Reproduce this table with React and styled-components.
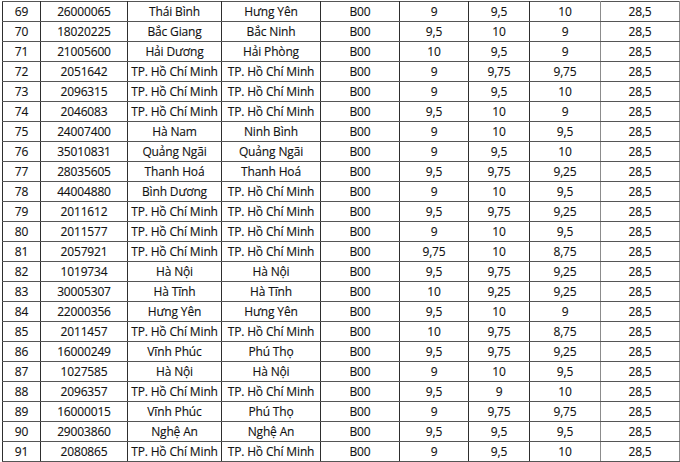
import React from "react";
import styled, { createGlobalStyle } from "styled-components";

const Global = createGlobalStyle`
  html, body { margin: 0; padding: 0; background: #fff; }
  body { font-family: "Open Sans", "Noto Sans", sans-serif; }
`;

const Wrap = styled.div`
  padding: 1px 0 0 2px;
`;

const Table = styled.table`
  border-collapse: collapse;
  table-layout: fixed;
  width: 678px;
  font-size: 12px;
  color: #111;
`;

const Row = styled.tr`
  height: 20px;
`;

const Cell = styled.td`
  border: 1px solid ${(p) => (p.$light ? "#8c8c8c" : "#2e2e2e")};
  border-top-color: #555;
  border-bottom-color: #555;
  padding: 0;
  text-align: center;
  line-height: 18px;
  white-space: nowrap;
  overflow: hidden;
  letter-spacing: -0.15px;
  -webkit-text-stroke: 0.12px #111;
`;

const widths = [38, 87, 94, 99, 79, 69, 61, 71, 79];
const TP = "TP. Hồ Chí Minh";

const data = [
  [69, "26000065", "Thái Bình", "Hưng Yên", "9", "9,5", "10"],
  [70, "18020225", "Bắc Giang", "Bắc Ninh", "9,5", "10", "9"],
  [71, "21005600", "Hải Dương", "Hải Phòng", "10", "9,5", "9"],
  [72, "2051642", TP, TP, "9", "9,75", "9,75"],
  [73, "2096315", TP, TP, "9", "9,5", "10"],
  [74, "2046083", TP, TP, "9,5", "10", "9"],
  [75, "24007400", "Hà Nam", "Ninh Bình", "9", "10", "9,5"],
  [76, "35010831", "Quảng Ngãi", "Quảng Ngãi", "9", "9,5", "10"],
  [77, "28035605", "Thanh Hoá", "Thanh Hoá", "9,5", "9,75", "9,25"],
  [78, "44004880", "Bình Dương", TP, "9", "10", "9,5"],
  [79, "2011612", TP, TP, "9,5", "9,75", "9,25"],
  [80, "2011577", TP, TP, "9", "10", "9,5"],
  [81, "2057921", TP, TP, "9,75", "10", "8,75"],
  [82, "1019734", "Hà Nội", "Hà Nội", "9,5", "9,75", "9,25"],
  [83, "30005307", "Hà Tĩnh", "Hà Tĩnh", "10", "9,25", "9,25"],
  [84, "22000356", "Hưng Yên", "Hưng Yên", "9,5", "10", "9"],
  [85, "2011457", TP, TP, "10", "9,75", "8,75"],
  [86, "16000249", "Vĩnh Phúc", "Phú Thọ", "9,5", "9,75", "9,25"],
  [87, "1027585", "Hà Nội", "Hà Nội", "9", "10", "9,5"],
  [88, "2096357", TP, TP, "9,5", "9", "10"],
  [89, "16000015", "Vĩnh Phúc", "Phú Thọ", "9", "9,75", "9,75"],
  [90, "29003860", "Nghệ An", "Nghệ An", "9,5", "9,5", "9,5"],
  [91, "2080865", TP, TP, "9", "9,5", "10"],
];

export default function App() {
  return (
    <>
      <Global />
      <Wrap>
        <Table>
          <colgroup>
            {widths.map((w, i) => (
              <col key={i} style={{ width: w }} />
            ))}
          </colgroup>
          <tbody>
            {data.map((r) => {
              const cells = [r[0], r[1], r[2], r[3], "B00", r[4], r[5], r[6], "28,5"];
              return (
                <Row key={r[0]}>
                  {cells.map((c, i) => (
                    <Cell key={i} $light={i >= 7}>
                      {c}
                    </Cell>
                  ))}
                </Row>
              );
            })}
          </tbody>
        </Table>
      </Wrap>
    </>
  );
}
